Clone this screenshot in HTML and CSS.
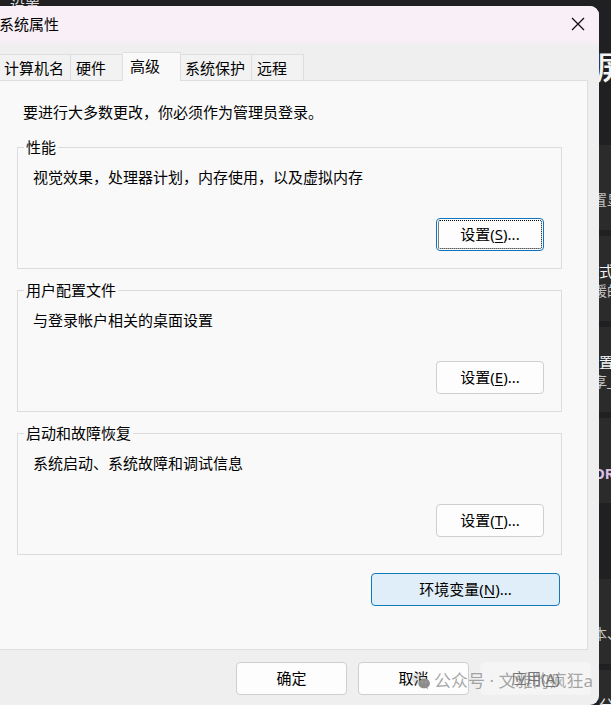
FILE: index.html
```
<!DOCTYPE html>
<html lang="zh-CN">

<head>
  <meta charset="UTF-8">
  <meta name="viewport" content="width=device-width, initial-scale=1.0">
  <title>系统属性</title>
  <link rel="stylesheet" href="styles.css">
</head>

<body>
  <div class="settings-top">设置</div>

  <div class="desktop">
    <main class="dialog">
      <header class="title-bar">
        <h1>系统属性</h1>
        <button class="close" aria-label="关闭">
          <svg width="14" height="14" viewBox="0 0 14 14" fill="none" stroke="#111" stroke-width="1.3">
            <path d="M1 1L13 13M13 1L1 13" />
          </svg>
        </button>
      </header>

      <nav class="tabs" role="tablist">
        <button class="tab tab-wide" role="tab">计算机名</button>
        <button class="tab" role="tab">硬件</button>
        <button class="tab active" role="tab" aria-selected="true">高级</button>
        <button class="tab tab-wide" role="tab">系统保护</button>
        <button class="tab" role="tab">远程</button>
      </nav>

      <section class="panel" role="tabpanel">
        <p class="intro">要进行大多数更改，你必须作为管理员登录。</p>

        <fieldset class="group">
          <legend>性能</legend>
          <p>视觉效果，处理器计划，内存使用，以及虚拟内存</p>
          <button class="btn focused">设置(<u>S</u>)...</button>
        </fieldset>

        <fieldset class="group">
          <legend>用户配置文件</legend>
          <p>与登录帐户相关的桌面设置</p>
          <button class="btn">设置(<u>E</u>)...</button>
        </fieldset>

        <fieldset class="group">
          <legend>启动和故障恢复</legend>
          <p>系统启动、系统故障和调试信息</p>
          <button class="btn">设置(<u>T</u>)...</button>
        </fieldset>

        <button class="btn env">环境变量(<u>N</u>)...</button>
      </section>

      <footer class="actions">
        <button class="btn">确定</button>
        <button class="btn">取消</button>
        <button class="btn" disabled>应用(<u>A</u>)</button>
        <div class="watermark">
          <svg width="18" height="16" viewBox="0 0 18 16" fill="#8c8c8c">
            <path d="M7 0C3 0 0 2.600 0 5.800c0 1.800 1 3.400 2.500 4.500L2 12.200l2.300-1.200c.6.200 1.200.3 1.900.3C6 7.500 9 4.800 13.400 4.700 12.700 2 10.100 0 7 0z" opacity=".25" />
            <path d="M12.200 5.500c-3.200 0-5.700 2.100-5.700 4.900s2.500 4.900 5.700 4.900c.7 0 1.300-.1 1.900-.3l1.900 1-.5-1.700c1.500-.9 2.400-2.300 2.400-3.900 0-2.800-2.500-4.900-5.700-4.900z" />
            <circle cx="10.300" cy="9" r=".6" fill="#ccc" />
            <circle cx="14" cy="9" r=".6" fill="#ccc" />
          </svg>
          <span>公众号 · 文雅的疯狂a</span>
        </div>
      </footer>
    </main>

    <aside class="settings">
      <div class="heading">屏</div>
      <div class="card single"><small>置显</small></div>
      <div class="card"><span>式</span><small>暖的</small></div>
      <div class="card"><span>置</span><small>享_</small></div>
      <div class="card single"><b>OR</b></div>
      <div class="space"></div>
      <div class="card single"><small>本、</small></div>
      <div class="card"><span>分</span></div>
    </aside>
  </div>
</body>

</html>
```

FILE: styles.css
```
* {
  box-sizing: border-box;
}

body {
  display: flex;
  flex-direction: column;
  height: 100vh;
  margin: 0;
  overflow: hidden;
  background: #201f21;
  color: #000;
  font-family: "Noto Sans", "Noto Sans CJK SC", sans-serif;
  font-size: 15px;
  line-height: 20px;
}

button {
  font: inherit;
  color: inherit;
}

p {
  margin: 0;
}

.settings-top {
  flex: none;
  height: 6px;
  padding-left: 10px;
  overflow: hidden;
  color: #ddd;
  line-height: 10px;
}

.desktop {
  display: flex;
  flex: 1;
  min-height: 0;
}

.dialog {
  display: flex;
  flex: 1;
  flex-direction: column;
  min-width: 0;
  background: #efefef;
  border-radius: 0 9px 9px 0;
  overflow: hidden;
}

.title-bar {
  display: flex;
  flex: none;
  align-items: center;
  justify-content: space-between;
  height: 38px;
  padding: 0 14px 2px 0;
  background: linear-gradient(#f9eff7 85%, #f4eff3);
}

.title-bar h1 {
  margin: 0 0 0 -1px;
  font-size: 15px;
  font-weight: normal;
}

.close {
  display: flex;
  padding: 0;
  border: none;
  background: none;
}

/* tabs */
.tabs {
  display: flex;
  flex: none;
  align-items: flex-end;
  padding-top: 8px;
}

.tab {
  width: 52px;
  height: 26px;
  padding: 0 5px;
  border: 1px solid #dedede;
  border-width: 1px 1px 0 0;
  background: #f2f2f2;
  text-align: left;
  white-space: nowrap;
}

.tab-wide {
  width: 71px;
  padding: 0 4px;
}

.tab.active {
  z-index: 1;
  width: 58px;
  height: 29px;
  margin-bottom: -1px;
  padding: 0 7px 3px;
  background: #f9f9f9;
}

.panel {
  display: flex;
  flex: none;
  flex-direction: column;
  margin-right: 11px;
  padding: 21px 25px 43px 17px;
  border: 1px solid #dedede;
  border-left: none;
  background: #f9f9f9;
}

.intro {
  padding-left: 6px;
  margin-bottom: 15px;
}

.group {
  display: flex;
  flex-direction: column;
  min-width: 0;
  margin: 0 0 11px;
  padding: 10px 17px 17px 15px;
  border: 1px solid #dcdcdc;
}

.group legend {
  margin-left: -9px;
  padding: 0 2px;
}

.btn {
  height: 33px;
  padding: 0 0 2px;
  border: 1px solid #cfcfcf;
  border-radius: 4px;
  background: #fdfdfd;
}

.btn u {
  text-underline-offset: 2px;
}

.group .btn {
  align-self: flex-end;
  width: 108px;
  margin-top: 31px;
}

.btn.focused {
  border-color: #0f74bd;
  outline: 1px dotted #000;
  outline-offset: -3px;
}

.btn.env {
  align-self: flex-end;
  width: 189px;
  margin: 7px 2px 0 0;
  border-color: #0f7ab8;
  background: #e0eef9;
}

.actions {
  position: relative;
  display: flex;
  flex: 1;
  align-items: flex-start;
  justify-content: flex-end;
  gap: 11px;
  padding: 12px 8px 10px 0;
}

.actions .btn {
  width: 111px;
}

.actions .btn:disabled {
  border-color: #f3f3f3;
  background: #f5f5f5;
  color: #777;
}

.watermark {
  position: absolute;
  right: 6px;
  bottom: 13px;
  display: flex;
  align-items: center;
  gap: 4px;
  color: rgba(110, 110, 110, 0.6);
  font-size: 17px;
  line-height: 22px;
  white-space: nowrap;
}

/* settings page behind the dialog */
.settings {
  flex: none;
  width: 12px;
  overflow: hidden;
  color: #f4f4f4;
  white-space: nowrap;
}

.settings .heading {
  height: 139px;
  margin-left: -3px;
  padding-top: 40px;
  font-size: 32px;
  font-weight: 500;
  line-height: 42px;
}

.settings .card {
  display: flex;
  flex-direction: column;
  height: 85px;
  margin-bottom: 6px;
  padding-top: 25px;
  background: #2b2b2b;
}

.settings .card.single {
  padding-top: 45px;
}

.settings small {
  margin-left: -6px;
  color: #c4c4c4;
  font-size: 14px;
}

.settings b {
  margin-left: -6px;
  color: #dcbfe2;
}

.settings .space {
  height: 70px;
}
```
